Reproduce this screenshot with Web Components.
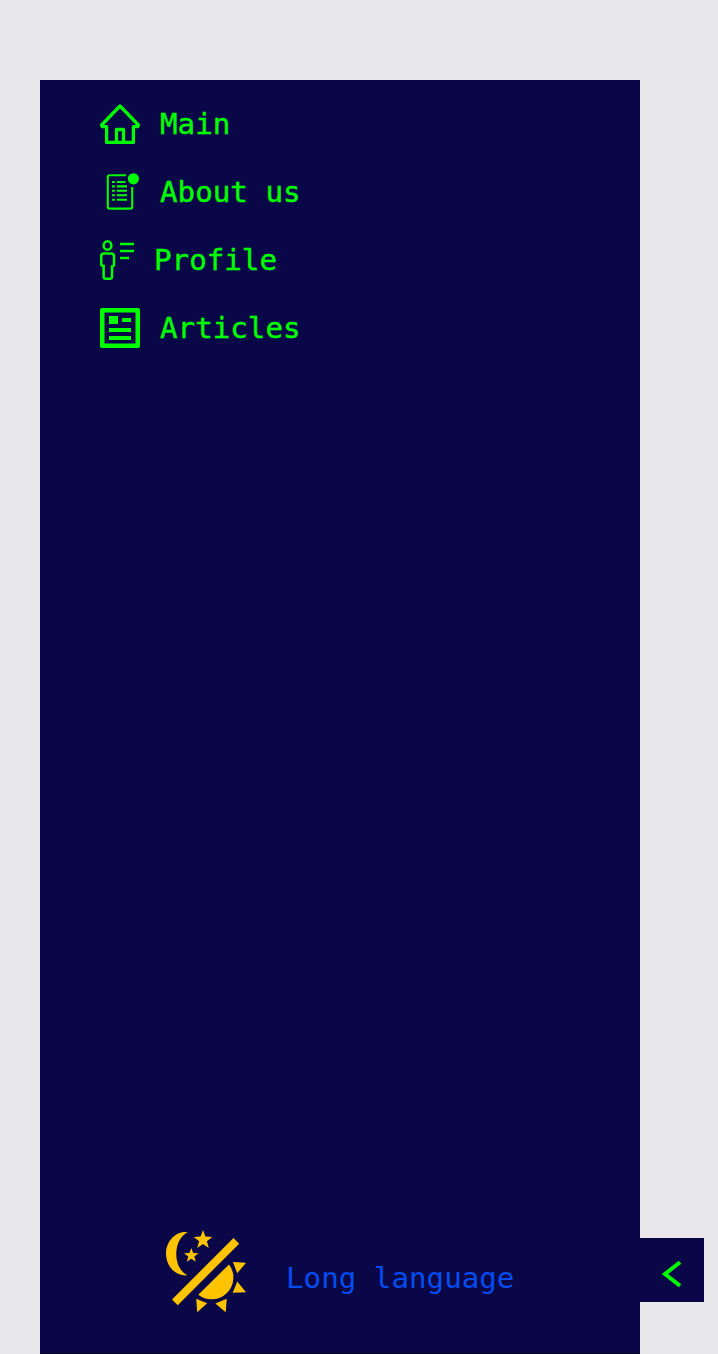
<!DOCTYPE html>
<html lang="en"><head><meta charset="utf-8"><title>Sidebar</title>
<style>html,body{margin:0;height:100%;overflow:hidden;background:#e8e8ea}body{box-sizing:border-box;padding:80px 0 0 40px}</style></head>
<body>
<app-sidebar>
<nav-item>
<svg slot="icon" width="40" height="40" viewBox="0 0 40 40" fill="none" stroke="#0f0" stroke-width="3.3" stroke-linejoin="round"><path d="M6.6 38.4V22.7H2.3L1.6 21 20 2 38.4 21l-.7 1.7h-4.3v15.7zM16.5 38V25.5h7V38"/></svg>
Main</nav-item>
<nav-item>
<svg slot="icon" width="40" height="40" viewBox="0 0 40 40" fill="none" stroke="#0f0" stroke-width="2.1"><path d="M26 3.2H9.5q-1.7 0-1.7 1.7v30q0 1.7 1.7 1.7h21q1.7 0 1.7-1.7V15"/><path d="M12 10h2.8m2 0h8.7M12 14.4h2.8m2 0H27M12 18.8h2.8m2 0H27M12 23.2h2.8m2 0H27M12 27.7h2.8m2 0H27"/><circle cx="33.4" cy="6.8" r="5.6" fill="#0f0" stroke="none"/></svg>
About us</nav-item>
<nav-item>
<svg slot="icon" width="34" height="40" viewBox="0 0 34 40" fill="none" stroke="#0f0" stroke-width="2.5"><ellipse cx="7.5" cy="5.5" rx="3.9" ry="4.2"/><path d="M4 13.6h7.2q2.8 0 2.8 2.8v8.2q0 1.8-2 1.8v10.4q0 2-2 2H5.6q-2 0-2-2V25.8q-2.4 0-2.4-1.8v-7.6Q1.2 13.6 4 13.6z"/><path d="M20 4h14M20 11h14M20 18h9"/></svg>
Profile</nav-item>
<nav-item>
<svg slot="icon" width="40" height="40" viewBox="0 0 40 40" fill="#0f0"><path fill-rule="evenodd" d="M2 0h36q2 0 2 2v36q0 2-2 2H2q-2 0-2-2V2q0-2 2-2zm2.5 4.4v31.2h31V4.4z"/><path d="M9 8h9v8H9zM22 10h9v4h-9zM9 20h22v4H9zM9 28h22v4H9z"/></svg>
Articles</nav-item>
<theme-switcher slot="footer"></theme-switcher>
<language-button slot="footer">Long language</language-button>
</app-sidebar>
<script>
const define = (name, html) => customElements.define(name, class extends HTMLElement {
  constructor() {
    super();
    const t = document.createElement('template');
    t.innerHTML = html;
    this.attachShadow({mode: 'open'}).append(t.content.cloneNode(true));
  }
});
define('nav-item', `<style>
:host{display:flex;align-items:center;gap:20px;height:40px;color:#0f0;white-space:nowrap;-webkit-text-stroke:.4px #0f0}
::slotted(svg){display:block;flex:none}
</style><slot name="icon"></slot><span><slot></slot></span>`);
define('theme-switcher', `<style>:host{display:block;width:80px;height:84px}svg{display:block}</style>
<svg width="80" height="84" viewBox="165 1231 80 84" fill="#ffc400" overflow="visible">
<path d="M187.5 1232.2C175 1231 166 1242 166 1253.7S175 1276.5 187.5 1275.3C172.5 1268 172.5 1240 187.5 1232.2z"/>
<path d="M203 1230l2.4 6.6 6.9.3-5.4 4.3 1.9 6.7-5.8-3.9-5.8 3.9 1.9-6.7-5.4-4.3 6.9-.3zM191.3 1248l1.9 5.1 5.3.2-4.2 3.3 1.5 5.1-4.5-3-4.5 3 1.5-5.1-4.2-3.3 5.3-.2z"/>
<path d="M233.5 1238l5.7 5.7-61.5 61.5-5.7-5.7z"/>
<path d="M229 1264.4A21.8 21.8 0 0 1 198.3 1294.8z"/>
<path d="M233 1262l13 .8-8.8 10.5zM237.3 1281.5l8.7 10.8-13.3.4zM196.2 1298.8l11 4.5-10 9zM226.7 1298.7l-1 13.6-10.3-8.8z"/>
</svg>`);
define('language-button', `<style>:host{display:block;color:#054cf0;white-space:nowrap;line-height:40px;padding:10px 0 0 1px}</style><slot></slot>`);
define('collapse-toggle', `<style>:host{display:grid;place-items:center;width:64px;height:64px;background:#090747}</style>
<svg width="64" height="64" viewBox="0 0 64 64" fill="none" stroke="#0f0" stroke-width="4"><path d="M40 24.2L25 36 40 47.8"/></svg>`);
define('app-sidebar', `<style>
:host{display:flex;flex-direction:column;position:relative;box-sizing:border-box;width:600px;height:1274px;padding:24px 0 38px 60px;background:#090747;border-bottom:1px solid #050420;font:29.2px/40px "DejaVu Sans Mono",monospace}
nav{display:flex;flex-direction:column;gap:28px}
footer{display:flex;align-items:center;gap:40px;margin-top:auto;padding-left:65px}
collapse-toggle{position:absolute;left:100%;bottom:51px}
</style><nav><slot></slot></nav><footer><slot name="footer"></slot></footer><collapse-toggle></collapse-toggle>`);
</script>
</body></html>
